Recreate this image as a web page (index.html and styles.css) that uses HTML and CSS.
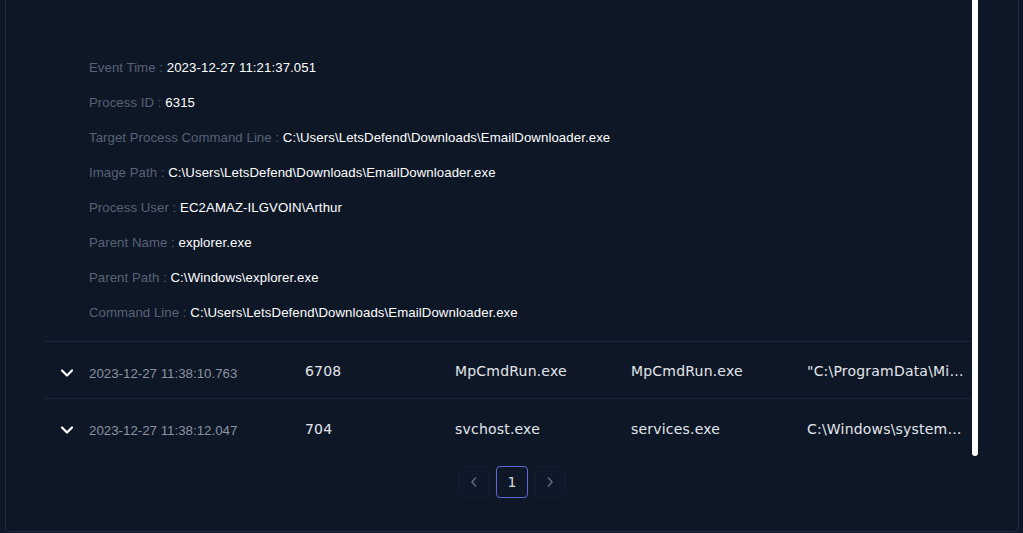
FILE: index.html
```html
<!DOCTYPE html>
<html>
<head>
<meta charset="utf-8">
<link rel="stylesheet" href="styles.css">
</head>
<body>
<div class="panel">
  <div class="scroll">
    <div class="table">
      <div class="details">
        <div class="kv"><span class="k">Event Time : </span><span class="v">2023-12-27 11:21:37.051</span></div>
        <div class="kv"><span class="k">Process ID : </span><span class="v">6315</span></div>
        <div class="kv"><span class="k">Target Process Command Line : </span><span class="v">C:\Users\LetsDefend\Downloads\EmailDownloader.exe</span></div>
        <div class="kv"><span class="k">Image Path : </span><span class="v">C:\Users\LetsDefend\Downloads\EmailDownloader.exe</span></div>
        <div class="kv"><span class="k">Process User : </span><span class="v">EC2AMAZ-ILGVOIN\Arthur</span></div>
        <div class="kv"><span class="k">Parent Name : </span><span class="v">explorer.exe</span></div>
        <div class="kv"><span class="k">Parent Path : </span><span class="v">C:\Windows\explorer.exe</span></div>
        <div class="kv"><span class="k">Command Line : </span><span class="v">C:\Users\LetsDefend\Downloads\EmailDownloader.exe</span></div>
      </div>
      <div class="row">
        <div class="cell chev"><svg width="14" height="10" viewBox="0 0 14 10"><path d="M2 2.5 L7 7.5 L12 2.5" fill="none" stroke="#fff" stroke-width="2.2" stroke-linecap="round" stroke-linejoin="round"/></svg></div>
        <div class="cell date">2023-12-27 11:38:10.763</div>
        <div class="cell mono">6708</div>
        <div class="cell mono">MpCmdRun.exe</div>
        <div class="cell mono">MpCmdRun.exe</div>
        <div class="cell mono">"C:\ProgramData\Mi…</div>
      </div>
      <div class="row last">
        <div class="cell chev"><svg width="14" height="10" viewBox="0 0 14 10"><path d="M2 2.5 L7 7.5 L12 2.5" fill="none" stroke="#fff" stroke-width="2.2" stroke-linecap="round" stroke-linejoin="round"/></svg></div>
        <div class="cell date">2023-12-27 11:38:12.047</div>
        <div class="cell mono">704</div>
        <div class="cell mono">svchost.exe</div>
        <div class="cell mono">services.exe</div>
        <div class="cell mono">C:\Windows\system…</div>
      </div>
    </div>
    <div class="scrollbar"></div>
  </div>
  <div class="pager">
    <div class="pg nav"><svg width="8" height="12" viewBox="0 0 8 12"><path d="M5.5 2 L2 6 L5.5 10" fill="none" stroke="#5d6879" stroke-width="1.6" stroke-linecap="round" stroke-linejoin="round"/></svg></div>
    <div class="pg active">1</div>
    <div class="pg nav"><svg width="8" height="12" viewBox="0 0 8 12"><path d="M2.5 2 L6 6 L2.5 10" fill="none" stroke="#5d6879" stroke-width="1.6" stroke-linecap="round" stroke-linejoin="round"/></svg></div>
  </div>
</div>
</body>
</html>
```
FILE: styles.css
```css
html, body {
  margin: 0;
  padding: 0;
  background: #0e1726;
  height: 533px;
  overflow: hidden;
}
.panel {
  box-sizing: border-box;
  height: 532px;
  margin: 0 4px 0 5px;
  border: 1px solid #1d2c46;
  border-top: none;
  border-radius: 0 0 4px 4px;
  background: #0e1726;
}
.scroll {
  display: flex;
  height: 456px;
  padding-left: 39px;
}
.table {
  width: 927px;
}
.scrollbar {
  width: 6px;
  height: 456px;
  background: #ffffff;
  border-radius: 0 0 3px 3px;
}
.details {
  padding: 50px 0 11px 44px;
  border-bottom: 1px solid #1a2540;
}
.kv {
  height: 35px;
  line-height: 35px;
  font-family: "Liberation Sans", Arial, sans-serif;
  font-size: 13.2px;
  letter-spacing: 0.06px;
  white-space: nowrap;
}
.k {
  color: #586276;
}
.v {
  color: #ffffff;
  letter-spacing: 0.1px;
}
.row {
  display: grid;
  grid-template-columns: 44px 216px 150px 176px 176px 165px;
  height: 56px;
  align-items: center;
  border-bottom: 1px solid #1a2540;
}
.row.last {
  border-bottom: none;
  height: 57px;
}
.cell {
  white-space: nowrap;
  overflow: hidden;
}
.chev {
  display: flex;
  justify-content: center;
  padding-top: 5px;
}
.date {
  font-family: "Liberation Sans", Arial, sans-serif;
  font-size: 13.3px;
  color: #8a92a3;
  padding-top: 6px;
}
.mono {
  font-family: "DejaVu Sans", sans-serif;
  font-size: 14px;
  color: #e3e6ec;
  letter-spacing: 0.2px;
  padding-top: 2px;
}
.pager {
  display: flex;
  justify-content: center;
  gap: 6px;
  margin-top: 10px;
}
.pg {
  box-sizing: border-box;
  width: 32px;
  height: 32px;
  border-radius: 4px;
  display: flex;
  align-items: center;
  justify-content: center;
  font-family: "DejaVu Sans", sans-serif;
  font-size: 14px;
  color: #d6d9e0;
}
.pg.nav {
  background: #0f1828;
  border: 1px solid #131d2d;
}
.pg.active {
  border: 1px solid #5a68d8;
}
```
